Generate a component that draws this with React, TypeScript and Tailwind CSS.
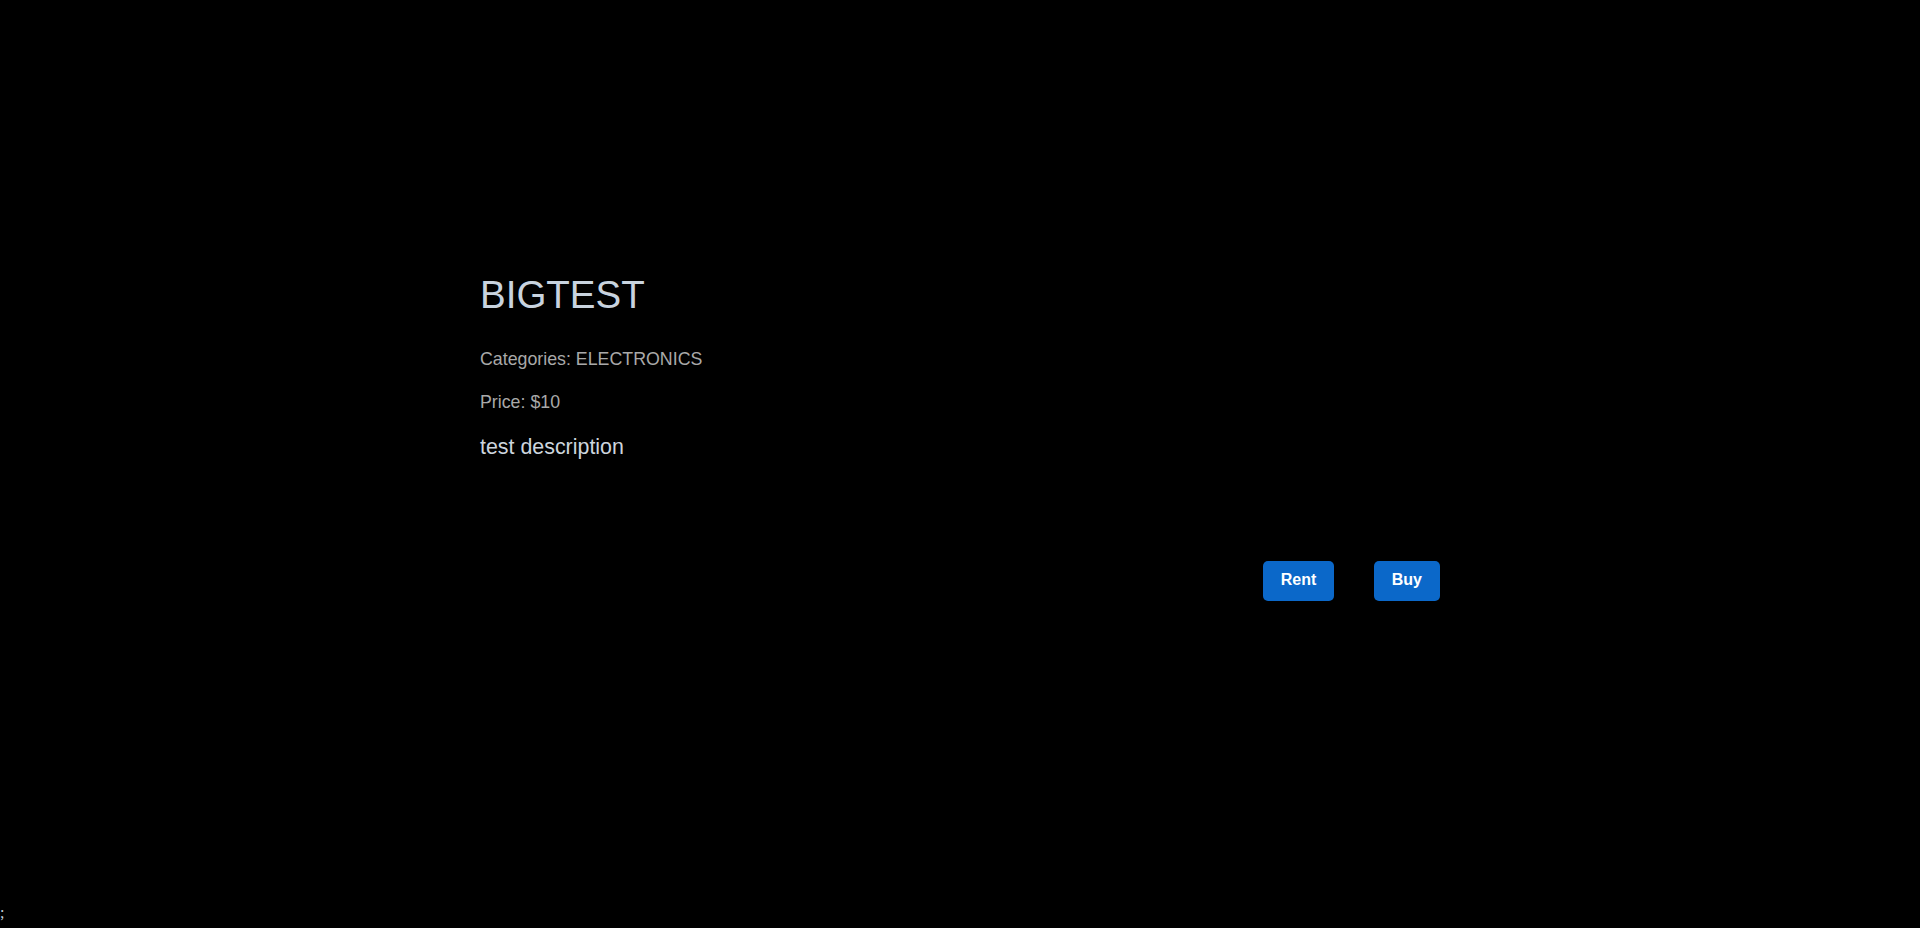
export default function App() {
  return (
    <div className="bg-black min-h-screen font-['Liberation_Sans',Arial,sans-serif]">
      <div className="h-[904px]">
        <div className="max-w-[960px] mx-auto pt-[273px]">
          <h1 className="text-[38.5px] leading-[44px] font-normal text-[#c8d3df]">BIGTEST</h1>
          <p className="mt-[32px] text-[17.8px] leading-[20px] text-[#a9a9a9]">
            Categories: ELECTRONICS
          </p>
          <p className="mt-[23px] text-[17.8px] leading-[20px] text-[#a9a9a9]">Price: $10</p>
          <p className="mt-[22.6px] text-[21.4px] leading-[24px] text-[#cdd5de]">test description</p>
          <div className="mt-[102px] flex justify-end gap-[40px]">
            <button className="bg-[#0b68c9] text-white font-bold text-[16px] leading-[19px] px-[17.5px] pt-[9px] pb-[12px] rounded-[5px]">
              Rent
            </button>
            <button className="bg-[#0b68c9] text-white font-bold text-[16px] leading-[19px] px-[18px] pt-[9px] pb-[12px] rounded-[5px]">
              Buy
            </button>
          </div>
        </div>
      </div>
      <div className="text-[16px] leading-[18px] text-[#c8d3df] font-['Liberation_Serif',serif]">;</div>
    </div>
  );
}
